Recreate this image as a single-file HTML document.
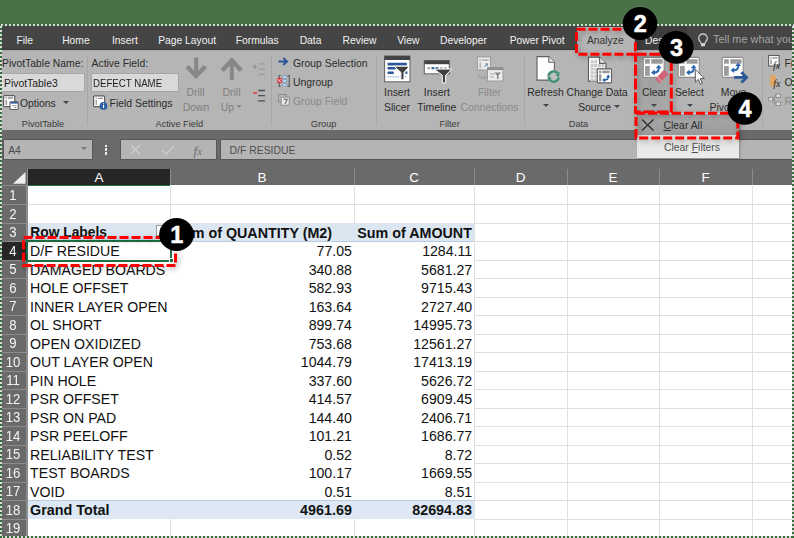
<!DOCTYPE html><html><head><meta charset="utf-8"><style>
*{margin:0;padding:0;box-sizing:border-box}
html,body{width:794px;height:538px;overflow:hidden;background:#4a7148;font-family:"Liberation Sans",sans-serif}
.a{position:absolute;white-space:nowrap;line-height:1}
svg{position:absolute;overflow:visible}
</style></head><body>
<div style="position:absolute;left:2px;top:26px;width:790px;height:24px;background:#454545;"></div>
<div style="position:absolute;left:2px;top:50px;width:790px;height:80px;background:#b5b5b5;"></div>
<div style="position:absolute;left:2px;top:130px;width:790px;height:38px;background:#6a6a6a;"></div>
<div style="position:absolute;left:2px;top:48.6px;width:790px;height:1.2px;background:#393939;"></div>
<div style="position:absolute;left:2px;top:49.8px;width:790px;height:1.2px;background:#aaaaaa;"></div>
<div class="a" style="left:16.40px;top:36.18px;font-size:10.3px;color:#f2f2f2;">File</div>
<div class="a" style="left:62.20px;top:36.18px;font-size:10.3px;color:#f2f2f2;">Home</div>
<div class="a" style="left:112.00px;top:36.18px;font-size:10.3px;color:#f2f2f2;">Insert</div>
<div class="a" style="left:158.20px;top:36.18px;font-size:10.3px;color:#f2f2f2;">Page Layout</div>
<div class="a" style="left:235.80px;top:36.18px;font-size:10.3px;color:#f2f2f2;">Formulas</div>
<div class="a" style="left:299.70px;top:36.18px;font-size:10.3px;color:#f2f2f2;">Data</div>
<div class="a" style="left:342.60px;top:36.18px;font-size:10.3px;color:#f2f2f2;">Review</div>
<div class="a" style="left:397.20px;top:36.18px;font-size:10.3px;color:#f2f2f2;">View</div>
<div class="a" style="left:440.00px;top:36.18px;font-size:10.3px;color:#f2f2f2;">Developer</div>
<div class="a" style="left:509.70px;top:36.18px;font-size:10.3px;color:#f2f2f2;">Power Pivot</div>
<div style="position:absolute;left:637px;top:26px;width:50px;height:24px;background:#3d3d3d;"></div>
<div style="position:absolute;left:577px;top:27px;width:58px;height:24px;background:#b5b5b5;"></div>
<div class="a" style="left:587.00px;top:36.18px;font-size:10.3px;color:#333;">Analyze</div>
<div class="a" style="left:645.00px;top:36.18px;font-size:10.3px;color:#f2f2f2;">Design</div>
<svg style="left:697px;top:33px" width="12" height="14" viewBox="0 0 12 14"><path d="M6 0.9a4.4 4.4 0 0 0-2.7 7.8c.5.4.8 1 .8 1.6v.5h3.8v-.5c0-.6.3-1.2.8-1.6A4.4 4.4 0 0 0 6 0.9z" fill="none" stroke="#cfcfcf" stroke-width="1.1"/><rect x="4" y="10.6" width="4" height="2.6" rx=".6" fill="#d8d8d8"/></svg>
<div class="a" style="left:713.00px;top:34.27px;font-size:10.9px;color:#a4a4a4;">Tell me what you want to do</div>
<div class="a" style="left:2.00px;top:58.70px;font-size:10.4px;color:#2b2b2b;">PivotTable Name:</div>
<div style="position:absolute;left:0px;top:73.3px;width:84.5px;height:19px;background:#d9d9d9;border:1px solid #a6a6a6;"></div>
<div class="a" style="left:4.00px;top:78.90px;font-size:10.4px;color:#1e1e1e;">PivotTable3</div>
<div class="a" style="left:20.00px;top:98.50px;font-size:10.4px;color:#2b2b2b;">Options</div>
<svg style="left:63px;top:101px" width="7" height="4"><path d="M0 0h6L3 3z" fill="#444"/></svg>
<div class="a" style="left:21.80px;top:119.71px;font-size:9.2px;color:#3a3a3a;">PivotTable</div>
<div style="position:absolute;left:87px;top:55px;width:1px;height:71px;background:#a6a6a6;"></div>
<div class="a" style="left:91.50px;top:59.00px;font-size:10.4px;color:#2b2b2b;">Active Field:</div>
<div style="position:absolute;left:91px;top:73.3px;width:87.5px;height:19px;background:#d9d9d9;border:1px solid #a6a6a6;"></div>
<div class="a" style="left:93.40px;top:79.30px;font-size:10.4px;color:#1e1e1e;transform:scaleX(0.93);transform-origin:0 0;">DEFECT NAME</div>
<div class="a" style="left:109.60px;top:99.00px;font-size:10.4px;color:#2b2b2b;">Field Settings</div>
<div class="a" style="left:95.50px;width:200px;text-align:center;top:87.80px;font-size:10.4px;color:#808080;">Drill</div>
<div class="a" style="left:96.00px;width:200px;text-align:center;top:102.70px;font-size:10.4px;color:#808080;">Down</div>
<div class="a" style="left:131.50px;width:200px;text-align:center;top:87.80px;font-size:10.4px;color:#808080;">Drill</div>
<div class="a" style="left:127.50px;width:200px;text-align:center;top:102.70px;font-size:10.4px;color:#808080;">Up</div>
<svg style="left:236px;top:105px" width="7" height="4"><path d="M0 0h6L3 3z" fill="#8a8a8a"/></svg>
<div class="a" style="left:79.30px;width:200px;text-align:center;top:119.71px;font-size:9.2px;color:#3a3a3a;">Active Field</div>
<div style="position:absolute;left:271px;top:55px;width:1px;height:71px;background:#a6a6a6;"></div>
<div class="a" style="left:293.00px;top:58.70px;font-size:10.4px;color:#2b2b2b;">Group Selection</div>
<div class="a" style="left:293.00px;top:77.80px;font-size:10.4px;color:#2b2b2b;">Ungroup</div>
<div class="a" style="left:293.00px;top:97.00px;font-size:10.4px;color:#8a8a8a;">Group Field</div>
<div class="a" style="left:223.60px;width:200px;text-align:center;top:119.71px;font-size:9.2px;color:#3a3a3a;">Group</div>
<div style="position:absolute;left:376px;top:55px;width:1px;height:71px;background:#a6a6a6;"></div>
<div class="a" style="left:297.00px;width:200px;text-align:center;top:87.80px;font-size:10.4px;color:#2b2b2b;">Insert</div>
<div class="a" style="left:297.00px;width:200px;text-align:center;top:102.70px;font-size:10.4px;color:#2b2b2b;">Slicer</div>
<div class="a" style="left:336.80px;width:200px;text-align:center;top:87.80px;font-size:10.4px;color:#2b2b2b;">Insert</div>
<div class="a" style="left:336.80px;width:200px;text-align:center;top:102.70px;font-size:10.4px;color:#2b2b2b;">Timeline</div>
<div class="a" style="left:389.50px;width:200px;text-align:center;top:87.80px;font-size:10.4px;color:#8a8a8a;">Filter</div>
<div class="a" style="left:389.50px;width:200px;text-align:center;top:102.70px;font-size:10.4px;color:#8a8a8a;">Connections</div>
<div class="a" style="left:349.60px;width:200px;text-align:center;top:119.71px;font-size:9.2px;color:#3a3a3a;">Filter</div>
<div style="position:absolute;left:524px;top:55px;width:1px;height:71px;background:#a6a6a6;"></div>
<div class="a" style="left:445.50px;width:200px;text-align:center;top:87.80px;font-size:10.4px;color:#2b2b2b;">Refresh</div>
<svg style="left:543px;top:104px" width="7" height="4"><path d="M0 0h6L3 3z" fill="#444"/></svg>
<div class="a" style="left:497.00px;width:200px;text-align:center;top:87.80px;font-size:10.4px;color:#2b2b2b;">Change Data</div>
<div class="a" style="left:494.60px;width:200px;text-align:center;top:102.70px;font-size:10.4px;color:#2b2b2b;">Source</div>
<svg style="left:613.5px;top:105px" width="7" height="4"><path d="M0 0h6L3 3z" fill="#444"/></svg>
<div class="a" style="left:478.50px;width:200px;text-align:center;top:119.71px;font-size:9.2px;color:#3a3a3a;">Data</div>
<div style="position:absolute;left:634px;top:55px;width:1px;height:71px;background:#a6a6a6;"></div>
<div style="position:absolute;left:637px;top:55px;width:33px;height:57px;background:radial-gradient(ellipse at 50% 40%,#9e9e9e,#a8a8a8 70%,#b0b0b0)"></div>
<div class="a" style="left:554.30px;width:200px;text-align:center;top:87.80px;font-size:10.4px;color:#2b2b2b;">Clear</div>
<svg style="left:651px;top:104px" width="7" height="4"><path d="M0 0h6L3 3z" fill="#444"/></svg>
<div class="a" style="left:589.40px;width:200px;text-align:center;top:87.80px;font-size:10.4px;color:#2b2b2b;">Select</div>
<svg style="left:687px;top:104px" width="7" height="4"><path d="M0 0h6L3 3z" fill="#444"/></svg>
<div class="a" style="left:633.50px;width:200px;text-align:center;top:87.80px;font-size:10.4px;color:#2b2b2b;">Move</div>
<div class="a" style="left:633.50px;width:200px;text-align:center;top:102.70px;font-size:10.4px;color:#2b2b2b;">PivotTable</div>
<div style="position:absolute;left:762px;top:55px;width:1px;height:71px;background:#a6a6a6;"></div>
<div class="a" style="left:784.50px;top:58.70px;font-size:10.4px;color:#2b2b2b;">Fields, Items</div>
<div class="a" style="left:784.50px;top:77.80px;font-size:10.4px;color:#2b2b2b;">OLAP Tools</div>
<div class="a" style="left:784.50px;top:97.00px;font-size:10.4px;color:#8a8a8a;">Relationships</div>
<svg style="left:3px;top:95px" width="16" height="15" viewBox="0 0 16 15"><rect x="0.6" y="0.6" width="11.2" height="11" rx="1" fill="#fff" stroke="#5e5e5e" stroke-width="1.2"/><rect x="2.5" y="2.2" width="1.6" height="1.6" fill="#9a9a9a"/><rect x="5" y="2.2" width="5" height="1.6" fill="#9a9a9a"/><rect x="2.5" y="5" width="1.6" height="5" fill="#9a9a9a"/><rect x="7" y="6.9" width="8.2" height="7.6" rx="0.8" fill="#fff" stroke="#5e5e5e" stroke-width="1.1"/><rect x="7.5" y="7" width="7.2" height="1.6" fill="#2e5f9e"/><rect x="9" y="10.2" width="2" height="1" fill="#888"/><rect x="11.5" y="10.2" width="2" height="1" fill="#888"/><rect x="11.5" y="12" width="2" height="1" fill="#888"/></svg>
<svg style="left:93px;top:95px" width="16" height="16" viewBox="0 0 16 16"><rect x="0.6" y="0.9" width="11" height="10.8" rx="1" fill="#fff" stroke="#5e5e5e" stroke-width="1.2"/><rect x="2.6" y="2.7" width="1.3" height="1.3" fill="#9a9a9a"/><rect x="5" y="2.7" width="5" height="1.3" fill="#9a9a9a"/><rect x="2.6" y="5" width="1.3" height="5" fill="#9a9a9a"/><circle cx="10.5" cy="10.9" r="3.9" fill="#2d60a3"/><rect x="10" y="10" width="1.1" height="3" fill="#fff"/><rect x="10" y="8.3" width="1.1" height="1" fill="#fff"/></svg>
<svg style="left:186px;top:56px" width="21" height="26" viewBox="0 0 21 26"><rect x="8.2" y="1.5" width="4" height="18" fill="#878787"/><path d="M1 10.5L10.1 19.8L19.4 10.5" fill="none" stroke="#878787" stroke-width="4.4" stroke-linejoin="miter"/></svg>
<svg style="left:221px;top:56px" width="21" height="26" viewBox="0 0 21 26"><rect x="8.8" y="6" width="4" height="18" fill="#878787"/><path d="M1.2 14.5L10.8 4.5L20.2 14.5" fill="none" stroke="#878787" stroke-width="4.4" stroke-linejoin="miter"/></svg>
<svg style="left:252px;top:61px" width="14" height="16" viewBox="0 0 14 16"><path d="M1 5.7h4M3 3.7v4" stroke="#8f8f8f" stroke-width="1.2"/><path d="M6.2 2.9h6.8M6.2 8.2h6.8M6.2 13.3h6.8" stroke="#9a9a9a" stroke-width="1.3"/></svg>
<svg style="left:252px;top:88px" width="14" height="15" viewBox="0 0 14 15"><path d="M1 5h4.4" stroke="#e23a3a" stroke-width="1.5"/><path d="M6.2 2.5h6.8M6.2 7.6h6.8M6.2 12.8h6.8" stroke="#4e4e4e" stroke-width="1.3"/></svg>
<svg style="left:278px;top:57px" width="11" height="9" viewBox="0 0 11 9"><path d="M0.5 4.5H9M5.3 1L9 4.5L5.3 8" fill="none" stroke="#2b5797" stroke-width="1.9"/></svg>
<svg style="left:277px;top:74px" width="14" height="14" viewBox="0 0 14 14"><path d="M3.6 1.5H2.2V12.5H3.6M10.5 1.5H12.3V12.5H10.5" fill="none" stroke="#555" stroke-width="1.1"/><ellipse cx="7.6" cy="2.9" rx="2.6" ry="1.5" fill="#bcd3ea" stroke="#6a8ab0" stroke-width=".6"/><ellipse cx="7.6" cy="6.9" rx="2.6" ry="1.5" fill="#bcd3ea" stroke="#6a8ab0" stroke-width=".6"/><ellipse cx="7.6" cy="10.9" rx="2.6" ry="1.5" fill="#bcd3ea" stroke="#6a8ab0" stroke-width=".6"/><rect x="0.3" y="4" width="4.6" height="5" fill="#d33"/><path d="M1.3 5.3l2.5 2.5M3.8 5.3l-2.5 2.5" stroke="#fff" stroke-width=".9"/></svg>
<svg style="left:278px;top:94px" width="12" height="12" viewBox="0 0 12 12"><rect x="0.5" y="0.5" width="7.5" height="7.5" fill="none" stroke="#8c8c8c" stroke-width="1"/><rect x="3.2" y="3.2" width="8" height="8" fill="#eaeaea" stroke="#8c8c8c" stroke-width="1"/><path d="M5.4 5.4h3.8L7 10" fill="none" stroke="#777" stroke-width="1.3"/></svg>
<svg style="left:384px;top:55px" width="27" height="28" viewBox="0 0 27 28"><rect x="0.6" y="1" width="25.4" height="25.8" fill="#fff" stroke="#6a6a6a" stroke-width="1.1"/><rect x="0.6" y="1" width="25.4" height="4" fill="#444"/><rect x="3.4" y="7.8" width="19.6" height="2.6" rx="1" fill="#2b579a"/><rect x="3.4" y="11.9" width="8.5" height="2.6" rx="1" fill="#2b579a"/><rect x="3.4" y="16.4" width="6.5" height="2.6" rx="1" fill="#2b579a"/><rect x="21.4" y="16.4" width="2" height="2.6" fill="#2b579a"/><path d="M3.4 21.7H23" stroke="#9cc0e4" stroke-width="1.6" stroke-dasharray="1.5 1"/><path d="M10.2 11.2H25.5L20 17.4V24.8H16.9V17.4Z" fill="#3e3e3e" stroke="#fff" stroke-width="1"/></svg>
<svg style="left:423px;top:59px" width="30" height="25" viewBox="0 0 30 25"><rect x="1.3" y="1.6" width="25" height="13.2" fill="#fff" stroke="#6a6a6a" stroke-width="1.1"/><rect x="1.3" y="1.6" width="25" height="3.6" fill="#444"/><rect x="4.3" y="8.2" width="2.8" height="2" fill="#aaa"/><rect x="8.5" y="8.2" width="3" height="2" fill="#2b579a"/><rect x="12.5" y="8.2" width="3" height="2" fill="#2b579a"/><rect x="17" y="8.2" width="2.8" height="2" fill="#aaa"/><rect x="21" y="8.2" width="2.8" height="2" fill="#aaa"/><path d="M11.1 10.1H28.8L22.6 16.3V23.9H19.3V16.3Z" fill="#3e3e3e" stroke="#fff" stroke-width="1"/></svg>
<svg style="left:476px;top:56px" width="29" height="27" viewBox="0 0 29 27"><rect x="1.5" y="1" width="13" height="13" fill="#ececec" stroke="#9a9a9a" stroke-width="1"/><rect x="3.3" y="3" width="2" height="2" fill="#bdbdbd"/><rect x="6.3" y="3" width="6.5" height="2" fill="#bdbdbd"/><rect x="3.3" y="6.4" width="2" height="6" fill="#bdbdbd"/><path d="M8.6 10.8l3-3.2M11.6 7.6l-.2 2.2M11.6 7.6l-2.1.3" stroke="#7f95b3" stroke-width="1.1" fill="none"/><rect x="11.5" y="11.5" width="15.5" height="13.5" fill="#ececec" stroke="#9a9a9a" stroke-width="1"/><rect x="11.5" y="11.5" width="15.5" height="2.6" fill="#8e8e8e"/><path d="M14 18h5M14 21h4" stroke="#a8a8a8" stroke-width="1.2"/><path d="M18.5 16.5h6.5l-2.5 3v3.5h-1.5v-3.5z" fill="#858585"/><path d="M1.5 18.5c2 3 5 4 8 3.2M7.8 19.2l2 2.5-2.7 1.5" fill="none" stroke="#a4a4a4" stroke-width="1.6"/></svg>
<svg style="left:535px;top:55px" width="28" height="28" viewBox="0 0 28 28"><path d="M2 1.6H13.8L19.4 7.2V25.1H2Z" fill="#fff" stroke="#606060" stroke-width="1.1"/><path d="M13.8 1.6V7.2H19.4" fill="#e8e8e8" stroke="#606060" stroke-width="1.1"/><circle cx="18.7" cy="21.6" r="6.7" fill="#bfbfbf"/><path d="M13.58 20.7A5.2 5.2 0 0 1 22.8 18.4" fill="none" stroke="#3f9070" stroke-width="2.3"/><path d="M20.75 20.0L24.85 16.8L23.9 22.2Z" fill="#3f9070"/><path d="M23.82 22.5A5.2 5.2 0 0 1 14.6 24.8" fill="none" stroke="#3f9070" stroke-width="2.3"/><path d="M16.65 23.2L12.55 26.4L13.5 21Z" fill="#3f9070"/></svg>
<svg style="left:587px;top:56px" width="26" height="28" viewBox="0 0 26 28"><path d="M1.5 1.1H12.6L18.9 7.4V25.1H1.5Z" fill="#fff" stroke="#5e5e5e" stroke-width="1.1"/><rect x="3.6" y="4.4" width="3" height="3" fill="#c9c9c9"/><rect x="3.6" y="8.0" width="3" height="3" fill="#c9c9c9"/><rect x="3.6" y="11.6" width="3" height="3" fill="#c9c9c9"/><rect x="3.6" y="15.2" width="3" height="3" fill="#c9c9c9"/><rect x="3.6" y="18.8" width="3" height="3" fill="#c9c9c9"/><rect x="3.6" y="22.4" width="3" height="3" fill="#c9c9c9"/><rect x="7.2" y="4.4" width="3" height="3" fill="#c9c9c9"/><rect x="7.2" y="8.0" width="3" height="3" fill="#c9c9c9"/><rect x="7.2" y="11.6" width="3" height="3" fill="#c9c9c9"/><rect x="7.2" y="15.2" width="3" height="3" fill="#c9c9c9"/><rect x="7.2" y="18.8" width="3" height="3" fill="#c9c9c9"/><rect x="7.2" y="22.4" width="3" height="3" fill="#c9c9c9"/><rect x="10.8" y="8.0" width="3" height="3" fill="#c9c9c9"/><rect x="10.8" y="11.6" width="3" height="3" fill="#c9c9c9"/><rect x="10.8" y="15.2" width="3" height="3" fill="#c9c9c9"/><rect x="10.8" y="18.8" width="3" height="3" fill="#c9c9c9"/><rect x="10.8" y="22.4" width="3" height="3" fill="#c9c9c9"/><rect x="14.4" y="8.0" width="3" height="3" fill="#c9c9c9"/><rect x="14.4" y="11.6" width="3" height="3" fill="#c9c9c9"/><rect x="14.4" y="15.2" width="3" height="3" fill="#c9c9c9"/><rect x="14.4" y="18.8" width="3" height="3" fill="#c9c9c9"/><rect x="14.4" y="22.4" width="3" height="3" fill="#c9c9c9"/><path d="M12.6 1.1V7.4H18.9" fill="#e4e4e4" stroke="#5e5e5e" stroke-width="1.1"/><rect x="10.3" y="12.9" width="14.2" height="14" rx=".8" fill="#fff" stroke="#5e5e5e" stroke-width="1.1"/><rect x="12" y="14.6" width="2.4" height="2.6" fill="#999"/><rect x="15.3" y="14.6" width="7.4" height="2.6" fill="#999"/><rect x="12" y="18.3" width="2.4" height="7" fill="#999"/><path d="M16.4 24.1H17.6Q21.2 24.1 21.2 20.5V20" fill="none" stroke="#2a64ad" stroke-width="1.6"/><path d="M15.2 24.1L18 21.9V26.3Z" fill="#2a64ad"/><path d="M21.2 18.6L19 21.2H23.4Z" fill="#2a64ad"/></svg>
<svg style="left:642px;top:56px" width="30" height="30" viewBox="0 0 30 30"><rect x="1.2" y="1.4" width="21" height="20" rx="1.3" fill="#fff" stroke="#8c8c8c" stroke-width="1.1"/><rect x="3" y="3.2" width="4.8" height="4.5" fill="#9c9c9c"/><rect x="9.3" y="3.2" width="11.3" height="4.5" fill="#9c9c9c"/><rect x="3" y="10" width="4.8" height="9.8" fill="#9c9c9c"/><path d="M10.6 16.5H12.3Q16.7 16.5 16.7 12.5V10.8" fill="none" stroke="#2a64ad" stroke-width="2"/><path d="M9.1 16.5L12.7 13.600000000000001V19.4Z" fill="#2a64ad"/><path d="M16.7 8.8L13.8 12.200000000000001H19.6Z" fill="#2a64ad"/><path d="M13.2 23L22 13.7L26.3 18.3L17.3 27.2Z" fill="#d26279"/><path d="M15.6 20.5L20 25L19.2 25.7L14.8 21.3Z" fill="#e7a3b0"/></svg>
<svg style="left:677px;top:56px" width="30" height="30" viewBox="0 0 30 30"><rect x="1.2" y="1.4" width="21" height="20" rx="1.3" fill="#fff" stroke="#8c8c8c" stroke-width="1.1"/><rect x="3" y="3.2" width="4.8" height="4.5" fill="#9c9c9c"/><rect x="9.3" y="3.2" width="11.3" height="4.5" fill="#9c9c9c"/><rect x="3" y="10" width="4.8" height="9.8" fill="#9c9c9c"/><path d="M10.6 16.5H12.3Q16.7 16.5 16.7 12.5V10.8" fill="none" stroke="#2a64ad" stroke-width="2"/><path d="M9.1 16.5L12.7 13.600000000000001V19.4Z" fill="#2a64ad"/><path d="M16.7 8.8L13.8 12.200000000000001H19.6Z" fill="#2a64ad"/><path d="M18.3 13.3V26.2L21.3 23.4L23.5 28.2L25.4 27.3L23.2 22.6H27.4Z" fill="#fff" stroke="#4a4a4a" stroke-width="0.9" stroke-linejoin="round"/></svg>
<svg style="left:721px;top:56px" width="30" height="30" viewBox="0 0 30 30"><rect x="1.2" y="1.4" width="21" height="20" rx="1.3" fill="#fff" stroke="#8c8c8c" stroke-width="1.1"/><rect x="3" y="3.2" width="4.8" height="4.5" fill="#9c9c9c"/><rect x="9.3" y="3.2" width="11.3" height="4.5" fill="#9c9c9c"/><rect x="3" y="10" width="4.8" height="9.8" fill="#9c9c9c"/><path d="M11.1 14.2H12.8Q17.2 14.2 17.2 10.2V8.5" fill="none" stroke="#2a64ad" stroke-width="2"/><path d="M9.6 14.2L13.2 11.3V17.1Z" fill="#2a64ad"/><path d="M17.2 6.5L14.3 9.9H20.1Z" fill="#2a64ad"/><path d="M13.2 21.4H24" stroke="#2b5797" stroke-width="2.8"/><path d="M20.4 16.2L25.6 21.4L20.4 26.6" fill="none" stroke="#2b5797" stroke-width="2.8"/></svg>
<svg style="left:768px;top:54px" width="14" height="16" viewBox="0 0 14 16"><rect x="0.6" y="1.5" width="10.5" height="10.5" fill="#fff" stroke="#5e5e5e" stroke-width="1.1"/><rect x="2.3" y="3.2" width="1.5" height="1.5" fill="#999"/><rect x="4.5" y="3.2" width="5" height="1.5" fill="#999"/><rect x="2.3" y="5.5" width="1.5" height="5" fill="#999"/><text x="5" y="14.6" font-family="Liberation Serif" font-style="italic" font-size="10" fill="#222">fx</text></svg>
<svg style="left:768px;top:74px" width="16" height="14" viewBox="0 0 16 14"><path d="M1.8 2.2C1.8 .6 8.2 .6 8.2 2.2V10.7C8.2 12.3 1.8 12.3 1.8 10.7Z" fill="#e0a866"/><text x="5.3" y="13" font-family="Liberation Serif" font-style="italic" font-size="10" fill="#222">fx</text></svg>
<svg style="left:768px;top:93px" width="14" height="14" viewBox="0 0 14 14"><g opacity=".55"><rect x="0.6" y="4.5" width="4" height="3.5" fill="#fff" stroke="#666" stroke-width=".9"/><rect x="8" y="1" width="4.5" height="3.5" fill="#fff" stroke="#666" stroke-width=".9"/><rect x="8" y="9" width="4.5" height="3.5" fill="#fff" stroke="#666" stroke-width=".9"/><path d="M4.6 6.3H6.3V2.8H8M6.3 6.3V10.8H8" fill="none" stroke="#666" stroke-width=".9"/></g></svg>
<div style="position:absolute;left:2.5px;top:138.6px;width:90px;height:21px;background:#b4b4b4;border:1px solid #585858;"></div>
<div class="a" style="left:8.20px;top:146.00px;font-size:10.4px;color:#4a4a4a;">A4</div>
<svg style="left:81px;top:147px" width="7" height="4"><path d="M0 0h6L3 3z" fill="#7a7a7a"/></svg>
<div style="position:absolute;left:104.8px;top:144.6px;width:2.4px;height:2.4px;background:#f0f0f0;"></div>
<div style="position:absolute;left:104.8px;top:148.4px;width:2.4px;height:2.4px;background:#f0f0f0;"></div>
<div style="position:absolute;left:104.8px;top:152.2px;width:2.4px;height:2.4px;background:#f0f0f0;"></div>
<div style="position:absolute;left:119.5px;top:138.6px;width:97px;height:21.4px;background:#b4b4b4;border:1px solid #585858;"></div>
<svg style="left:130px;top:144px" width="11" height="11" viewBox="0 0 11 11"><path d="M1 1L10 10M10 1L1 10" stroke="#cdcdcd" stroke-width="1.3"/></svg>
<svg style="left:161px;top:145px" width="14" height="11" viewBox="0 0 14 11"><path d="M1 5.5L5 9.5L13 1" fill="none" stroke="#cdcdcd" stroke-width="1.4"/></svg>
<div class="a" style="left:193.5px;top:143.5px;font-family:'Liberation Serif';font-style:italic;font-size:13.5px;color:#6e6e6e">f<span style="font-size:11px">x</span></div>
<div style="position:absolute;left:219.5px;top:138.6px;width:575px;height:21.4px;background:#b4b4b4;border:1px solid #585858;"></div>
<div class="a" style="left:229.60px;top:146.40px;font-size:10.4px;color:#4e4e4e;">D/F RESIDUE</div>
<div style="position:absolute;left:2px;top:168px;width:790px;height:368px;background:#ffffff;"></div>
<div style="position:absolute;left:170px;top:186px;width:1px;height:37px;background:#e0e0e0;"></div>
<div style="position:absolute;left:170px;top:519px;width:1px;height:17px;background:#e0e0e0;"></div>
<div style="position:absolute;left:354px;top:186px;width:1px;height:37px;background:#e0e0e0;"></div>
<div style="position:absolute;left:354px;top:519px;width:1px;height:17px;background:#e0e0e0;"></div>
<div style="position:absolute;left:474px;top:186px;width:1px;height:350px;background:#e0e0e0;"></div>
<div style="position:absolute;left:567px;top:186px;width:1px;height:350px;background:#e0e0e0;"></div>
<div style="position:absolute;left:659px;top:186px;width:1px;height:350px;background:#e0e0e0;"></div>
<div style="position:absolute;left:752px;top:186px;width:1px;height:350px;background:#e0e0e0;"></div>
<div style="position:absolute;left:845px;top:186px;width:1px;height:350px;background:#e0e0e0;"></div>
<div style="position:absolute;left:28px;top:204px;width:766px;height:1px;background:#e0e0e0;"></div>
<div style="position:absolute;left:28px;top:223px;width:766px;height:1px;background:#e0e0e0;"></div>
<div style="position:absolute;left:474px;top:241px;width:320px;height:1px;background:#e0e0e0;"></div>
<div style="position:absolute;left:474px;top:260px;width:320px;height:1px;background:#e0e0e0;"></div>
<div style="position:absolute;left:474px;top:278px;width:320px;height:1px;background:#e0e0e0;"></div>
<div style="position:absolute;left:474px;top:297px;width:320px;height:1px;background:#e0e0e0;"></div>
<div style="position:absolute;left:474px;top:315px;width:320px;height:1px;background:#e0e0e0;"></div>
<div style="position:absolute;left:474px;top:334px;width:320px;height:1px;background:#e0e0e0;"></div>
<div style="position:absolute;left:474px;top:352px;width:320px;height:1px;background:#e0e0e0;"></div>
<div style="position:absolute;left:474px;top:371px;width:320px;height:1px;background:#e0e0e0;"></div>
<div style="position:absolute;left:474px;top:389px;width:320px;height:1px;background:#e0e0e0;"></div>
<div style="position:absolute;left:474px;top:408px;width:320px;height:1px;background:#e0e0e0;"></div>
<div style="position:absolute;left:474px;top:426px;width:320px;height:1px;background:#e0e0e0;"></div>
<div style="position:absolute;left:474px;top:445px;width:320px;height:1px;background:#e0e0e0;"></div>
<div style="position:absolute;left:474px;top:463px;width:320px;height:1px;background:#e0e0e0;"></div>
<div style="position:absolute;left:474px;top:482px;width:320px;height:1px;background:#e0e0e0;"></div>
<div style="position:absolute;left:474px;top:500px;width:320px;height:1px;background:#e0e0e0;"></div>
<div style="position:absolute;left:474px;top:519px;width:320px;height:1px;background:#e0e0e0;"></div>
<div style="position:absolute;left:28px;top:223px;width:446px;height:18px;background:#dce6f1;"></div>
<div style="position:absolute;left:28px;top:241px;width:446px;height:1px;background:#b8cce4;"></div>
<div style="position:absolute;left:28px;top:500px;width:446px;height:1px;background:#b8cce4;"></div>
<div style="position:absolute;left:28px;top:501px;width:446px;height:18px;background:#dde8f4;"></div>
<div style="position:absolute;left:2px;top:168px;width:790px;height:17px;background:#6a6a6a;"></div>
<div style="position:absolute;left:28px;top:168.5px;width:142px;height:16.5px;background:#262626;"></div>
<div style="position:absolute;left:28px;top:185px;width:142px;height:1.2px;background:#217346;"></div>
<div style="position:absolute;left:170px;top:169px;width:1px;height:16px;background:#8c8c8c;"></div>
<div style="position:absolute;left:354px;top:169px;width:1px;height:16px;background:#8c8c8c;"></div>
<div style="position:absolute;left:474px;top:169px;width:1px;height:16px;background:#8c8c8c;"></div>
<div style="position:absolute;left:567px;top:169px;width:1px;height:16px;background:#8c8c8c;"></div>
<div style="position:absolute;left:659px;top:169px;width:1px;height:16px;background:#8c8c8c;"></div>
<div style="position:absolute;left:752px;top:169px;width:1px;height:16px;background:#8c8c8c;"></div>
<div style="position:absolute;left:845px;top:169px;width:1px;height:16px;background:#8c8c8c;"></div>
<div style="position:absolute;left:27px;top:168px;width:1px;height:18px;background:#8c8c8c;"></div>
<div style="position:absolute;left:2px;top:185px;width:25px;height:1px;background:#8c8c8c;"></div>
<svg style="left:12.6px;top:171.8px" width="13" height="13"><path d="M12.5 0V11.8H0z" fill="#f0f0f0"/></svg>
<div class="a" style="left:-1.00px;width:200px;text-align:center;top:171.47px;font-size:13.5px;color:#ffffff;">A</div>
<div class="a" style="left:162.00px;width:200px;text-align:center;top:171.47px;font-size:13.5px;color:#ffffff;">B</div>
<div class="a" style="left:314.00px;width:200px;text-align:center;top:171.47px;font-size:13.5px;color:#ffffff;">C</div>
<div class="a" style="left:420.50px;width:200px;text-align:center;top:171.47px;font-size:13.5px;color:#ffffff;">D</div>
<div class="a" style="left:513.00px;width:200px;text-align:center;top:171.47px;font-size:13.5px;color:#ffffff;">E</div>
<div class="a" style="left:605.50px;width:200px;text-align:center;top:171.47px;font-size:13.5px;color:#ffffff;">F</div>
<div style="position:absolute;left:2px;top:186px;width:25px;height:350px;background:#6a6a6a;"></div>
<div style="position:absolute;left:26.4px;top:186px;width:1.3px;height:350px;background:#8c8c8c;"></div>
<div style="position:absolute;left:2px;top:241.5px;width:25px;height:18.5px;background:#262626;"></div>
<div style="position:absolute;left:2px;top:204px;width:25px;height:1px;background:#8c8c8c;"></div>
<div style="position:absolute;left:2px;top:223px;width:25px;height:1px;background:#8c8c8c;"></div>
<div style="position:absolute;left:2px;top:241px;width:25px;height:1px;background:#8c8c8c;"></div>
<div style="position:absolute;left:2px;top:260px;width:25px;height:1px;background:#8c8c8c;"></div>
<div style="position:absolute;left:2px;top:278px;width:25px;height:1px;background:#8c8c8c;"></div>
<div style="position:absolute;left:2px;top:297px;width:25px;height:1px;background:#8c8c8c;"></div>
<div style="position:absolute;left:2px;top:315px;width:25px;height:1px;background:#8c8c8c;"></div>
<div style="position:absolute;left:2px;top:334px;width:25px;height:1px;background:#8c8c8c;"></div>
<div style="position:absolute;left:2px;top:352px;width:25px;height:1px;background:#8c8c8c;"></div>
<div style="position:absolute;left:2px;top:371px;width:25px;height:1px;background:#8c8c8c;"></div>
<div style="position:absolute;left:2px;top:389px;width:25px;height:1px;background:#8c8c8c;"></div>
<div style="position:absolute;left:2px;top:408px;width:25px;height:1px;background:#8c8c8c;"></div>
<div style="position:absolute;left:2px;top:426px;width:25px;height:1px;background:#8c8c8c;"></div>
<div style="position:absolute;left:2px;top:445px;width:25px;height:1px;background:#8c8c8c;"></div>
<div style="position:absolute;left:2px;top:463px;width:25px;height:1px;background:#8c8c8c;"></div>
<div style="position:absolute;left:2px;top:482px;width:25px;height:1px;background:#8c8c8c;"></div>
<div style="position:absolute;left:2px;top:500px;width:25px;height:1px;background:#8c8c8c;"></div>
<div style="position:absolute;left:2px;top:519px;width:25px;height:1px;background:#8c8c8c;"></div>
<div class="a" style="left:-86.70px;width:200px;text-align:center;top:188.24px;font-size:14.6px;color:#f4f4f4;transform:scaleX(0.9);">1</div>
<div class="a" style="left:-86.70px;width:200px;text-align:center;top:206.74px;font-size:14.6px;color:#f4f4f4;transform:scaleX(0.9);">2</div>
<div class="a" style="left:-86.70px;width:200px;text-align:center;top:225.24px;font-size:14.6px;color:#f4f4f4;transform:scaleX(0.9);">3</div>
<div class="a" style="left:-86.70px;width:200px;text-align:center;top:243.74px;font-size:14.6px;color:#f4f4f4;transform:scaleX(0.9);">4</div>
<div class="a" style="left:-86.70px;width:200px;text-align:center;top:262.24px;font-size:14.6px;color:#f4f4f4;transform:scaleX(0.9);">5</div>
<div class="a" style="left:-86.70px;width:200px;text-align:center;top:280.74px;font-size:14.6px;color:#f4f4f4;transform:scaleX(0.9);">6</div>
<div class="a" style="left:-86.70px;width:200px;text-align:center;top:299.24px;font-size:14.6px;color:#f4f4f4;transform:scaleX(0.9);">7</div>
<div class="a" style="left:-86.70px;width:200px;text-align:center;top:317.74px;font-size:14.6px;color:#f4f4f4;transform:scaleX(0.9);">8</div>
<div class="a" style="left:-86.70px;width:200px;text-align:center;top:336.24px;font-size:14.6px;color:#f4f4f4;transform:scaleX(0.9);">9</div>
<div class="a" style="left:-86.70px;width:200px;text-align:center;top:354.74px;font-size:14.6px;color:#f4f4f4;transform:scaleX(0.9);">10</div>
<div class="a" style="left:-86.70px;width:200px;text-align:center;top:373.24px;font-size:14.6px;color:#f4f4f4;transform:scaleX(0.9);">11</div>
<div class="a" style="left:-86.70px;width:200px;text-align:center;top:391.74px;font-size:14.6px;color:#f4f4f4;transform:scaleX(0.9);">12</div>
<div class="a" style="left:-86.70px;width:200px;text-align:center;top:410.24px;font-size:14.6px;color:#f4f4f4;transform:scaleX(0.9);">13</div>
<div class="a" style="left:-86.70px;width:200px;text-align:center;top:428.74px;font-size:14.6px;color:#f4f4f4;transform:scaleX(0.9);">14</div>
<div class="a" style="left:-86.70px;width:200px;text-align:center;top:447.24px;font-size:14.6px;color:#f4f4f4;transform:scaleX(0.9);">15</div>
<div class="a" style="left:-86.70px;width:200px;text-align:center;top:465.74px;font-size:14.6px;color:#f4f4f4;transform:scaleX(0.9);">16</div>
<div class="a" style="left:-86.70px;width:200px;text-align:center;top:484.24px;font-size:14.6px;color:#f4f4f4;transform:scaleX(0.9);">17</div>
<div class="a" style="left:-86.70px;width:200px;text-align:center;top:502.74px;font-size:14.6px;color:#f4f4f4;transform:scaleX(0.9);">18</div>
<div class="a" style="left:-86.70px;width:200px;text-align:center;top:521.24px;font-size:14.6px;color:#f4f4f4;transform:scaleX(0.9);">19</div>
<div class="a" style="left:30.30px;top:225.92px;font-size:13.8px;color:#111111;font-weight:bold;">Row Labels</div>
<div class="a" style="left:173.50px;top:225.50px;font-size:14.3px;color:#111111;font-weight:bold;">Sum of QUANTITY (M2)</div>
<div class="a" style="left:357.30px;top:225.50px;font-size:14.3px;color:#111111;font-weight:bold;">Sum of AMOUNT</div>
<div style="position:absolute;left:155.5px;top:225px;width:13px;height:11px;background:#ffffff;border:1px solid #9a9a9a;"></div>
<div class="a" style="left:30.10px;top:244.22px;font-size:14.15px;color:#111111;">D/F RESIDUE</div>
<div class="a" style="right:442.10px;top:244.22px;font-size:14.15px;color:#111111;">77.05</div>
<div class="a" style="right:321.80px;top:244.22px;font-size:14.15px;color:#111111;">1284.11</div>
<div class="a" style="left:30.10px;top:262.72px;font-size:14.15px;color:#111111;">DAMAGED BOARDS</div>
<div class="a" style="right:442.10px;top:262.72px;font-size:14.15px;color:#111111;">340.88</div>
<div class="a" style="right:321.80px;top:262.72px;font-size:14.15px;color:#111111;">5681.27</div>
<div class="a" style="left:30.10px;top:281.22px;font-size:14.15px;color:#111111;">HOLE OFFSET</div>
<div class="a" style="right:442.10px;top:281.22px;font-size:14.15px;color:#111111;">582.93</div>
<div class="a" style="right:321.80px;top:281.22px;font-size:14.15px;color:#111111;">9715.43</div>
<div class="a" style="left:30.10px;top:299.72px;font-size:14.15px;color:#111111;">INNER LAYER OPEN</div>
<div class="a" style="right:442.10px;top:299.72px;font-size:14.15px;color:#111111;">163.64</div>
<div class="a" style="right:321.80px;top:299.72px;font-size:14.15px;color:#111111;">2727.40</div>
<div class="a" style="left:30.10px;top:318.22px;font-size:14.15px;color:#111111;">OL SHORT</div>
<div class="a" style="right:442.10px;top:318.22px;font-size:14.15px;color:#111111;">899.74</div>
<div class="a" style="right:321.80px;top:318.22px;font-size:14.15px;color:#111111;">14995.73</div>
<div class="a" style="left:30.10px;top:336.72px;font-size:14.15px;color:#111111;">OPEN OXIDIZED</div>
<div class="a" style="right:442.10px;top:336.72px;font-size:14.15px;color:#111111;">753.68</div>
<div class="a" style="right:321.80px;top:336.72px;font-size:14.15px;color:#111111;">12561.27</div>
<div class="a" style="left:30.10px;top:355.22px;font-size:14.15px;color:#111111;">OUT LAYER OPEN</div>
<div class="a" style="right:442.10px;top:355.22px;font-size:14.15px;color:#111111;">1044.79</div>
<div class="a" style="right:321.80px;top:355.22px;font-size:14.15px;color:#111111;">17413.19</div>
<div class="a" style="left:30.10px;top:373.72px;font-size:14.15px;color:#111111;">PIN HOLE</div>
<div class="a" style="right:442.10px;top:373.72px;font-size:14.15px;color:#111111;">337.60</div>
<div class="a" style="right:321.80px;top:373.72px;font-size:14.15px;color:#111111;">5626.72</div>
<div class="a" style="left:30.10px;top:392.22px;font-size:14.15px;color:#111111;">PSR OFFSET</div>
<div class="a" style="right:442.10px;top:392.22px;font-size:14.15px;color:#111111;">414.57</div>
<div class="a" style="right:321.80px;top:392.22px;font-size:14.15px;color:#111111;">6909.45</div>
<div class="a" style="left:30.10px;top:410.72px;font-size:14.15px;color:#111111;">PSR ON PAD</div>
<div class="a" style="right:442.10px;top:410.72px;font-size:14.15px;color:#111111;">144.40</div>
<div class="a" style="right:321.80px;top:410.72px;font-size:14.15px;color:#111111;">2406.71</div>
<div class="a" style="left:30.10px;top:429.22px;font-size:14.15px;color:#111111;">PSR PEELOFF</div>
<div class="a" style="right:442.10px;top:429.22px;font-size:14.15px;color:#111111;">101.21</div>
<div class="a" style="right:321.80px;top:429.22px;font-size:14.15px;color:#111111;">1686.77</div>
<div class="a" style="left:30.10px;top:447.72px;font-size:14.15px;color:#111111;">RELIABILITY TEST</div>
<div class="a" style="right:442.10px;top:447.72px;font-size:14.15px;color:#111111;">0.52</div>
<div class="a" style="right:321.80px;top:447.72px;font-size:14.15px;color:#111111;">8.72</div>
<div class="a" style="left:30.10px;top:466.22px;font-size:14.15px;color:#111111;">TEST BOARDS</div>
<div class="a" style="right:442.10px;top:466.22px;font-size:14.15px;color:#111111;">100.17</div>
<div class="a" style="right:321.80px;top:466.22px;font-size:14.15px;color:#111111;">1669.55</div>
<div class="a" style="left:30.10px;top:484.72px;font-size:14.15px;color:#111111;">VOID</div>
<div class="a" style="right:442.10px;top:484.72px;font-size:14.15px;color:#111111;">0.51</div>
<div class="a" style="right:321.80px;top:484.72px;font-size:14.15px;color:#111111;">8.51</div>
<div class="a" style="left:30.10px;top:503.05px;font-size:14.35px;color:#111111;font-weight:bold;">Grand Total</div>
<div class="a" style="right:442.10px;top:503.05px;font-size:14.35px;color:#111111;font-weight:bold;">4961.69</div>
<div class="a" style="right:322.00px;top:503.05px;font-size:14.35px;color:#111111;font-weight:bold;">82694.83</div>
<div style="position:absolute;left:26px;top:240.3px;width:146px;height:21.5px;border:2px solid #217346"></div>
<div style="position:absolute;left:169px;top:258px;width:5px;height:5px;background:#217346;border:1px solid #fff;"></div>
<div style="position:absolute;left:637px;top:113px;width:102px;height:45px;background:#e6e6e6;box-shadow:1px 1px 2px rgba(0,0,0,.25)"></div>
<div style="position:absolute;left:637px;top:113.5px;width:102px;height:21.7px;background:linear-gradient(#a9a9a9,#9b9b9b)"></div>
<div style="position:absolute;left:637px;top:135.2px;width:102px;height:22.7px;background:linear-gradient(#e3e3e3,#ececec)"></div>
<svg style="left:641px;top:119px" width="14" height="12"><path d="M1 0.5L12.5 11.5M12.5 0.5L1 11.5" stroke="#333" stroke-width="1.5"/></svg>
<div class="a" style="left:663.50px;top:121.20px;font-size:10.4px;color:#2c2c2c;"><u style="text-underline-offset:0.6px">C</u>lear All</div>
<div class="a" style="left:664.00px;top:142.60px;font-size:10.4px;color:#505050;">Clear <u style="text-underline-offset:0.6px">F</u>ilters</div>
<div style="position:absolute;left:0;top:24px;width:794px;height:2px;background:repeating-linear-gradient(90deg,#376d3d 0 1px,#dedbdb 1px 3px,#376d3d 3px 4px)"></div>
<div style="position:absolute;left:0;top:536px;width:794px;height:2px;background:repeating-linear-gradient(90deg,#376d3d 0 1px,#dedbdb 1px 3px,#376d3d 3px 4px)"></div>
<div style="position:absolute;left:0;top:26px;width:2px;height:512px;background:repeating-linear-gradient(180deg,#dedbdb 0 2px,#376d3d 2px 4px)"></div>
<div style="position:absolute;left:792px;top:26px;width:2px;height:512px;background:repeating-linear-gradient(180deg,#dedbdb 0 2px,#376d3d 2px 4px)"></div>
<svg style="left:0;top:0;filter:drop-shadow(2px 2px 2.5px rgba(0,0,0,.3))" width="794" height="538"><path d="M23.5 237.4H175.5V265.4H23.5Z" fill="none" stroke="#ff0000" stroke-width="3" stroke-dasharray="9 3"/><path d="M576.5 29.3H635.5V54.2H576.5Z" fill="none" stroke="#ff0000" stroke-width="3" stroke-dasharray="9 3"/><path d="M635.5 54.2H671.3V112H635.5Z" fill="none" stroke="#ff0000" stroke-width="3" stroke-dasharray="11.2 2.6"/><path d="M636 113.3H737.8V137.9H636Z" fill="none" stroke="#ff0000" stroke-width="3" stroke-dasharray="9 3"/></svg>
<svg style="left:0;top:0" width="794" height="538"><ellipse cx="176.5" cy="234.5" rx="17.4" ry="16.4" fill="#000"/><text x="176.8" y="242.9" text-anchor="middle" font-family="Liberation Sans" font-weight="bold" font-size="23.5" fill="#fff" stroke="#fff" stroke-width="0.5">1</text><ellipse cx="640" cy="23.5" rx="17.4" ry="16.4" fill="#000"/><text x="640.3" y="31.9" text-anchor="middle" font-family="Liberation Sans" font-weight="bold" font-size="23.5" fill="#fff" stroke="#fff" stroke-width="0.5">2</text><ellipse cx="676.2" cy="47.4" rx="17.4" ry="16.4" fill="#000"/><text x="676.5" y="55.8" text-anchor="middle" font-family="Liberation Sans" font-weight="bold" font-size="23.5" fill="#fff" stroke="#fff" stroke-width="0.5">3</text><ellipse cx="744.7" cy="108.3" rx="17.4" ry="16.4" fill="#000"/><text x="745.0" y="116.7" text-anchor="middle" font-family="Liberation Sans" font-weight="bold" font-size="23.5" fill="#fff" stroke="#fff" stroke-width="0.5">4</text></svg>
</body></html>
